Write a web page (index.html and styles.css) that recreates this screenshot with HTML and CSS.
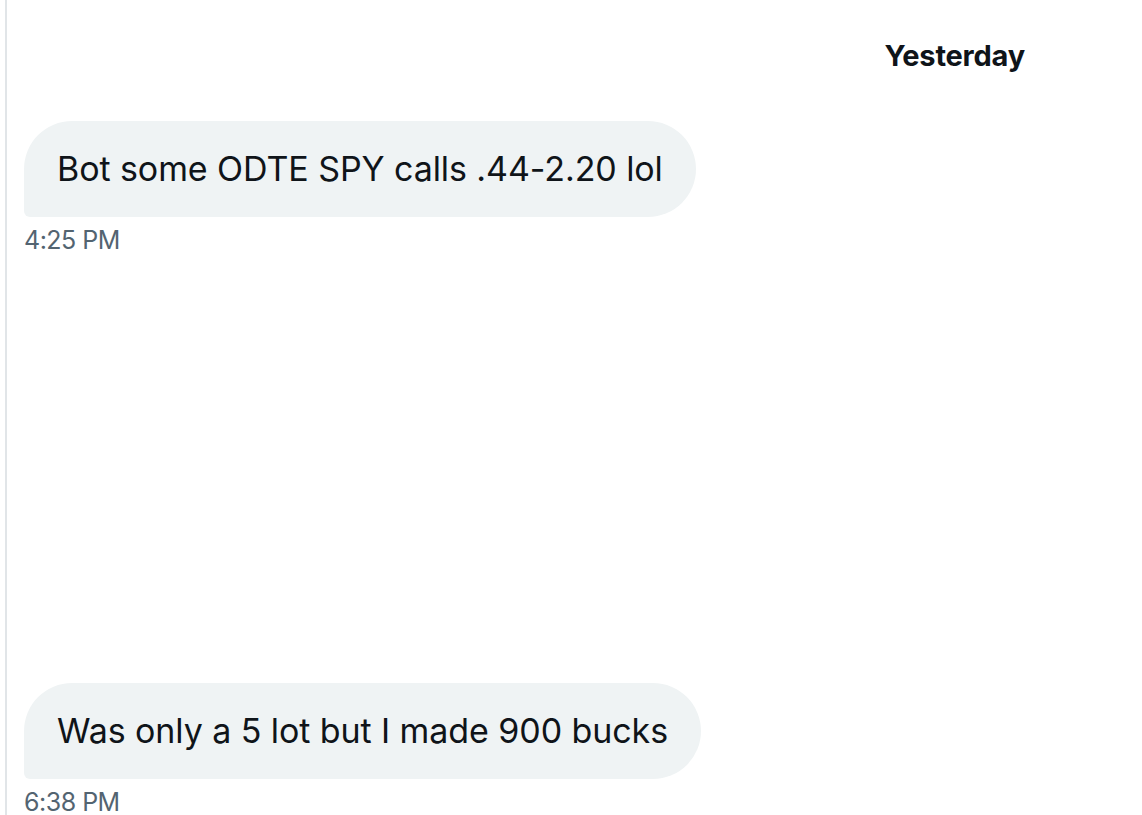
FILE: index.html
```html
<!DOCTYPE html>
<html>
<head>
<meta charset="utf-8">
<link rel="stylesheet" href="styles.css">
</head>
<body>
<div class="pane">
  <div class="day">Yesterday</div>
  <div class="msg first">
    <div class="bubble">Bot some ODTE SPY calls .44-2.20 lol</div>
    <div class="time">4:25 PM</div>
  </div>
  <div class="msg second">
    <div class="bubble">Was only a 5 lot but I made 900 bucks</div>
    <div class="time">6:38 PM</div>
  </div>
</div>
</body>
</html>
```
FILE: styles.css
```css
html, body {
  margin: 0;
  padding: 0;
  background: #ffffff;
  height: 100%;
  overflow: hidden;
}
body {
  font-family: Inter, "Noto Sans", sans-serif;
  color: #0f1419;
}
.pane {
  margin-left: 5px;
  border-left: 2px solid #e1e5e8;
  height: 815px;
  padding-left: 17px;
  display: flex;
  flex-direction: column;
}
.day {
  align-self: flex-end;
  margin-right: 117px;
  margin-top: 38px;
  font-size: 29px;
  font-weight: 700;
  line-height: 36px;
  letter-spacing: -0.2px;
}
.msg {
  display: flex;
  flex-direction: column;
  align-items: flex-start;
}
.first { margin-top: 47px; }
.second { margin-top: 429px; }
.bubble {
  background: #eff3f4;
  border-radius: 48px 48px 48px 6px;
  padding: 27px 33px;
  font-size: 34px;
  line-height: 42px;
  letter-spacing: -0.08px;
}
.time {
  margin-top: 9px;
  font-size: 25px;
  line-height: 28px;
  color: #536471;
  letter-spacing: -0.5px;
}
```
